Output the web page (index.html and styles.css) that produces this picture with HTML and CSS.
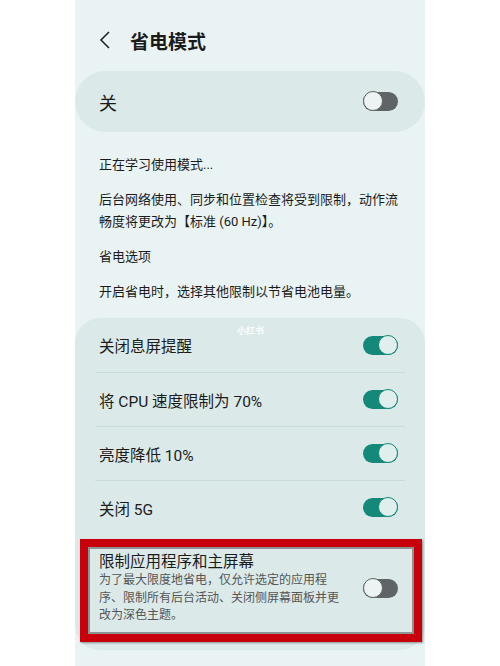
FILE: index.html
```html
<!DOCTYPE html>
<html lang="zh-CN">
<head>
  <meta charset="UTF-8">
  <title>省电模式</title>
  <link rel="stylesheet" href="styles.css">
</head>
<body>
  <div class="phone">
    <div class="header">
      <svg class="back" width="12" height="20" viewBox="0 0 12 20">
        <polyline points="10,2 2,10 10,18" fill="none" stroke="#222" stroke-width="1.6"/>
      </svg>
      <h1>省电模式</h1>
    </div>

    <div class="master">
      <span>关</span>
      <div class="toggle off"><span class="knob"></span></div>
    </div>

    <div class="info">
      <p>正在学习使用模式...</p>
      <p>后台网络使用、同步和位置检查将受到限制，动作流<br>畅度将更改为【标准 (60 Hz)】。</p>
      <p>省电选项</p>
      <p>开启省电时，选择其他限制以节省电池电量。</p>
    </div>

    <div class="options">
      <span class="watermark">小红书</span>
      <div class="row">
        <span>关闭息屏提醒</span>
        <div class="toggle on"><span class="knob"></span></div>
      </div>
      <div class="row">
        <span>将 CPU 速度限制为 70%</span>
        <div class="toggle on"><span class="knob"></span></div>
      </div>
      <div class="row">
        <span>亮度降低 10%</span>
        <div class="toggle on"><span class="knob"></span></div>
      </div>
      <div class="row last">
        <span>关闭 5G</span>
        <div class="toggle on"><span class="knob"></span></div>
      </div>
      <div class="highlight">
        <div class="text">
          <div class="title">限制应用程序和主屏幕</div>
          <div class="desc">为了最大限度地省电，仅允许选定的应用程<br>序、限制所有后台活动、关闭侧屏幕面板并更<br>改为深色主题。</div>
        </div>
        <div class="toggle off"><span class="knob"></span></div>
      </div>
    </div>
  </div>
</body>
</html>
```

FILE: styles.css
```css
body {
  margin: 0;
  background-color: #fff;
  font-family: Roboto, "Noto Sans CJK SC", sans-serif;
  color: #1b1b1b;
}

.phone {
  width: 350px;
  height: 666px;
  margin: 0 auto;
  background-color: #e9f3f3;
  overflow: hidden;
}

.header {
  height: 71px;
  box-sizing: border-box;
  padding: 9px 0 0 24px;
  display: flex;
  align-items: center;
}

.back {
  margin-right: 19px;
}

.header h1 {
  margin: 0;
  font-size: 19px;
  font-weight: 700;
}

.master {
  height: 61px;
  border-radius: 31px;
  background-color: #dbeae9;
  display: flex;
  align-items: center;
  justify-content: space-between;
  padding: 0 27px 0 24px;
  font-size: 18px;
}

.info {
  padding: 22px 24px 0;
  display: flex;
  flex-direction: column;
  gap: 13px;
  font-size: 13px;
  line-height: 22px;
}

.info p {
  margin: 0;
}

.options {
  position: relative;
  margin-top: 15px;
  background-color: #dbeae9;
  border-radius: 25px;
  padding-bottom: 8px;
}

.watermark {
  position: absolute;
  top: 6px;
  left: 162px;
  color: #fff;
  font-size: 9px;
  font-weight: 700;
  opacity: 0.9;
}

.row {
  height: 53px;
  margin: 0 20px;
  padding: 0 7px 0 4px;
  border-bottom: 1px solid #c8dcdb;
  display: flex;
  align-items: center;
  justify-content: space-between;
  font-size: 15.5px;
}

.row:first-of-type {
  height: 54px;
}

.row.last {
  border-bottom: none;
}

.highlight {
  margin: 5px 3px 0 5px;
  border: 8px solid #c8000c;
  box-shadow: inset 0 0 0 2px #8c9494, 1px 1px 2px rgba(0, 0, 0, 0.4);
  padding: 5px 16px 9px 11px;
  display: flex;
  align-items: center;
  justify-content: space-between;
}

.highlight .title {
  font-size: 15.5px;
  line-height: 20px;
}

.highlight .desc {
  font-size: 12px;
  line-height: 17.5px;
  color: #555;
}

.toggle {
  position: relative;
  width: 35px;
  height: 19px;
  border-radius: 10px;
  flex-shrink: 0;
}

.toggle .knob {
  position: absolute;
  top: -1px;
  width: 18px;
  height: 18px;
  border-radius: 50%;
  border: 1.5px solid;
}

.toggle.on {
  background-color: #14897a;
}

.toggle.on .knob {
  right: 0;
  background-color: #e0efed;
  border-color: #14897a;
}

.toggle.off {
  background-color: #5f6466;
}

.toggle.off .knob {
  left: 0;
  background-color: #edf3f2;
  border-color: #5f6466;
}
```
